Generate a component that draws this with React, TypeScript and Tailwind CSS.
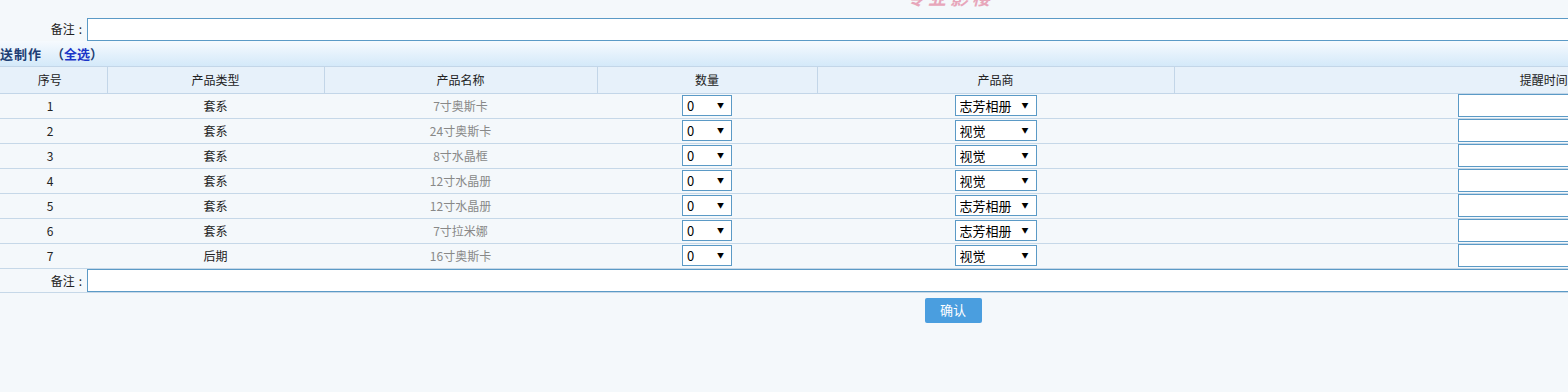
import React from "react";

type Row = {
  no: number;
  kind: string;
  name: string;
  qty: string;
  maker: string;
};

const rows: Row[] = [
  { no: 1, kind: "套系", name: "7寸奥斯卡", qty: "0", maker: "志芳相册" },
  { no: 2, kind: "套系", name: "24寸奥斯卡", qty: "0", maker: "视觉" },
  { no: 3, kind: "套系", name: "8寸水晶框", qty: "0", maker: "视觉" },
  { no: 4, kind: "套系", name: "12寸水晶册", qty: "0", maker: "视觉" },
  { no: 5, kind: "套系", name: "12寸水晶册", qty: "0", maker: "志芳相册" },
  { no: 6, kind: "套系", name: "7寸拉米娜", qty: "0", maker: "志芳相册" },
  { no: 7, kind: "后期", name: "16寸奥斯卡", qty: "0", maker: "视觉" },
];

const makers = ["志芳相册", "视觉"];

function FakeSelect({
  value,
  options,
  className,
}: {
  value: string;
  options: string[];
  className: string;
}) {
  return (
    <div className={`relative inline-block h-[21px] align-middle ${className}`}>
      <select
        defaultValue={value}
        className="h-full w-full appearance-none border border-[#5b9ac6] bg-white pl-[4px] text-left text-[13px] leading-[19px] text-black outline-none"
      >
        {options.map((o) => (
          <option key={o} value={o}>
            {o}
          </option>
        ))}
      </select>
      <span className="pointer-events-none absolute right-[8px] top-[5px] text-[7px] leading-[10px] text-black">
        ▼
      </span>
    </div>
  );
}

function NoteRow({ top }: { top: boolean }) {
  return (
    <div className={`flex items-start ${top ? "h-[24px]" : "h-[23px]"}`}>
      <div className="w-[94px] shrink-0 pr-[5px] text-right text-[12px] leading-[23px] text-[#222]">
        备注<span className="ml-[4px]">:</span>
      </div>
      <input
        type="text"
        className={`h-[23px] flex-1 border border-[#5b9ac6] bg-white outline-none ${top ? "mt-[1px]" : ""}`}
      />
    </div>
  );
}

export default function App() {
  const headers = ["序号", "产品类型", "产品名称", "数量", "产品商", "提醒时间"];
  return (
    <div
      className="h-[392px] w-[1568px] overflow-hidden bg-[#f4f8fb]"
      style={{ fontFamily: '"Noto Sans CJK SC", "Noto Sans", sans-serif' }}
    >
      <div className="-ml-[7px] w-[1920px]">
        <div className="relative h-[17px]">
          <span className="absolute left-[913px] top-[-13px] text-[18px] font-bold italic leading-[20px] tracking-[4px] text-[#e7a6ba]">
            专业影楼
          </span>
        </div>

        <NoteRow top />

        <div className="flex h-[26px] items-center border-b border-[#c3d6e8] bg-gradient-to-b from-[#f6fafe] to-[#d4e9f9] pl-[7px] text-[13px] font-bold text-[#1c3d74]">
          <span className="tracking-[1px]">送制作</span>
          <span className="ml-[9px]">
            （<span className="text-[#1a35c8]">全选</span>）
          </span>
        </div>

        <table className="w-[1920px] table-fixed border-collapse text-[12px]">
          <colgroup>
            <col className="w-[114px]" />
            <col className="w-[217px]" />
            <col className="w-[273px]" />
            <col className="w-[220px]" />
            <col className="w-[357px]" />
            <col />
          </colgroup>
          <thead>
            <tr className="h-[26px] bg-[#e7f1fa]">
              {headers.map((h, i) => (
                <th
                  key={h}
                  className={`border-b border-[#c3d6e8] text-center font-normal text-[#222] ${
                    i < headers.length - 1 ? "border-r" : ""
                  }`}
                >
                  {h}
                </th>
              ))}
            </tr>
          </thead>
          <tbody>
            {rows.map((r) => (
              <tr key={r.no} className="h-[25px] border-b border-[#c6d8e8]">
                <td className="text-center text-[#222]">{r.no}</td>
                <td className="text-center text-[#222]">{r.kind}</td>
                <td className="text-center text-[#888]">{r.name}</td>
                <td className="text-center">
                  <FakeSelect value={r.qty} options={["0", "1", "2", "3"]} className="w-[50px]" />
                </td>
                <td className="text-center">
                  <FakeSelect value={r.maker} options={makers} className="w-[82px]" />
                </td>
                <td className="text-center">
                  <input
                    type="text"
                    className="h-[23px] w-[171px] border border-[#5b9ac6] bg-white align-middle outline-none"
                  />
                </td>
              </tr>
            ))}
          </tbody>
        </table>

        <div className="border-b border-[#c6d8e8]">
          <NoteRow top={false} />
        </div>

        <div className="mt-[5px] flex justify-center">
          <button
            type="button"
            className="h-[25px] w-[57px] rounded-[2px] bg-[#4a9edf] text-[13px] text-white"
          >
            确认
          </button>
        </div>
      </div>
    </div>
  );
}
